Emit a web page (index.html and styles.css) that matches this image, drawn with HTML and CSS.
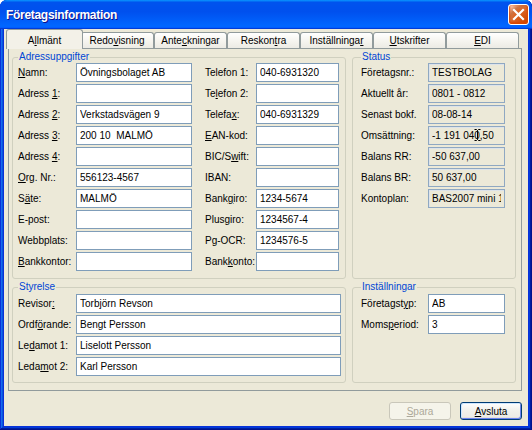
FILE: index.html
```html
<!DOCTYPE html>
<html lang="sv">
<head>
    <meta charset="UTF-8">
    <meta name="viewport" content="width=device-width, initial-scale=1.0">
    <title>Företagsinformation</title>
    <link rel="stylesheet" href="styles.css">
</head>
<body>
    <div class="window">
    <div class="title-bar">
        <span class="title">Företagsinformation</span>
        <button class="close" aria-label="Stäng">
        <svg width="13" height="13" viewBox="0 0 13 13"><path d="M2 2 L11 11 M11 2 L2 11" stroke="#fff" stroke-width="2.2" stroke-linecap="square"/></svg>
        </button>
    </div>
    <div class="client">
        <div class="tabs">
        <div class="tab active">A<u>l</u>lmänt</div>
        <div class="tab">Redo<u>v</u>isning</div>
        <div class="tab">Ante<u>c</u>kningar</div>
        <div class="tab">Reskon<u>t</u>ra</div>
        <div class="tab">Inställninga<u>r</u></div>
        <div class="tab"><u>U</u>tskrifter</div>
        <div class="tab"><u>E</u>DI</div>
        </div>
        <div class="panel">
        <fieldset class="group addr">
            <legend>Adressuppgifter</legend>
            <div class="form">
            <label><u>N</u>amn:</label><input type="text" value="Övningsbolaget AB">
            <label class="r">Telefon 1:</label><input type="text" value="040-6931320">
            <label>Adress <u>1</u>:</label><input type="text" value="">
            <label class="r">Te<u>l</u>efon 2:</label><input type="text" value="">
            <label>Adress <u>2</u>:</label><input type="text" value="Verkstadsvägen 9">
            <label class="r">Telefa<u>x</u>:</label><input type="text" value="040-6931329">
            <label>Adress <u>3</u>:</label><input type="text" value="200 10  MALMÖ">
            <label class="r"><u>E</u>AN-kod:</label><input type="text" value="">
            <label>Adress <u>4</u>:</label><input type="text" value="">
            <label class="r">BIC/S<u>w</u>ift:</label><input type="text" value="">
            <label><u>O</u>rg. Nr.:</label><input type="text" value="556123-4567">
            <label class="r">IBAN:</label><input type="text" value="">
            <label>S<u>ä</u>te:</label><input type="text" value="MALMÖ">
            <label class="r">Bank<u>g</u>iro:</label><input type="text" value="1234-5674">
            <label>E-post:</label><input type="text" value="">
            <label class="r">Plus<u>g</u>iro:</label><input type="text" value="1234567-4">
            <label>Webbplats:</label><input type="text" value="">
            <label class="r">Pg-OCR:</label><input type="text" value="1234576-5">
            <label><u>B</u>ankkontor:</label><input type="text" value="">
            <label class="r">Bank<u>k</u>onto:</label><input type="text" value="">
            </div>
        </fieldset>
        <fieldset class="group status">
            <legend>Status</legend>
            <div class="form">
            <label>Företagsnr.:</label><input type="text" readonly value="TESTBOLAG">
            <label>Aktuellt år:</label><input type="text" readonly value="0801 - 0812">
            <label>Senast bokf.</label><input type="text" readonly value="08-08-14">
            <label>Omsättning:</label>
            <span class="cell"><input type="text" readonly value="-1 191 040,50"><svg class="ibeam" width="7" height="12" viewBox="0 0 7 12"><path d="M0.5 0.5 H2.5 L3.5 1.5 L4.5 0.5 H6.5 M3.5 1.5 V10.5 M0.5 11.5 H2.5 L3.5 10.5 L4.5 11.5 H6.5" fill="none" stroke="#000" stroke-width="1"/></svg></span>
            <label>Balans RR:</label><input type="text" readonly value="-50 637,00">
            <label>Balans BR:</label><input type="text" readonly value="50 637,00">
            <label>Kontoplan:</label><input type="text" readonly value="BAS2007 mini 1.0">
            </div>
        </fieldset>
        <fieldset class="group board">
            <legend>Styrelse</legend>
            <div class="form">
            <label>Revisor<u>:</u></label><input type="text" value="Torbjörn Revson">
            <label>Ordf<u>ö</u>rande:</label><input type="text" value="Bengt Persson">
            <label>Le<u>d</u>amot 1:</label><input type="text" value="Liselott Persson">
            <label>Leda<u>m</u>ot 2:</label><input type="text" value="Karl Persson">
            </div>
        </fieldset>
        <fieldset class="group settings">
            <legend>Inställningar</legend>
            <div class="form">
            <label>Företagst<u>y</u>p:</label><input type="text" value="AB">
            <label>Moms<u>p</u>eriod:</label><input type="text" value="3">
            </div>
        </fieldset>
        </div>
        <div class="buttons">
        <button class="btn" disabled><u>S</u>para</button>
        <button class="btn default"><u>A</u>vsluta</button>
        </div>
    </div>
    </div>
</body>
</html>
```

FILE: styles.css
```css
body {
    margin: 0;
    background: #fff;
    font-family: "Liberation Sans", Arial, sans-serif;
    font-size: 10px;
    color: #000;
}
.window {
    width: 532px;
    height: 430px;
    display: flex;
    flex-direction: column;
    background: #0831D9;
    border-radius: 7px 7px 0 0;
    overflow: hidden;
    box-shadow: inset -1px -1px #00138C, inset 1px 1px #0831D9, inset -2px -2px #001EA0, inset 2px 2px #166AEE, inset -3px -3px #003BDA, inset 3px 3px #0855DD;
}
.title-bar {
    height: 29px;
    flex: none;
    display: flex;
    align-items: center;
    justify-content: space-between;
    padding: 0 3px 0 6px;
    background: linear-gradient(180deg, #0997FF, #0053EE 8%, #0050EE 40%, #06F 88%, #06F 93%, #005BFF 95%, #003DD7 96%, #003DD7);
}
.title {
    color: #fff;
    font-weight: bold;
    font-size: 12px;
    letter-spacing: -0.3px;
    text-shadow: 1px 1px #0F1089;
    margin-top: 1px;
}
.close {
    width: 21px;
    height: 21px;
    padding: 0;
    border: 1px solid #fff;
    border-radius: 3px;
    display: flex;
    align-items: center;
    justify-content: center;
    background: radial-gradient(circle at 90% 90%, #CC4600 0%, #DC6527 55%, #CD7546 70%, #FFCCB2 90%, #fff 100%);
    box-shadow: inset 0 -1px 2px 1px #DA4600;
}
.client {
    flex: 1;
    margin: 0 4px 4px;
    background: #ECE9D8;
    display: flex;
    flex-direction: column;
    padding: 0 6px 0 4px;
}
.tabs {
    height: 19px;
    display: flex;
    align-items: flex-end;
    position: relative;
    z-index: 1;
}
.tab {
    width: 73px;
    height: 16px;
    box-sizing: border-box;
    border: 1px solid #919B9C;
    border-bottom: none;
    border-radius: 3px 3px 0 0;
    background: linear-gradient(#fff, #F6F5F0 50%, #ECEBE4);
    text-align: center;
    line-height: 15px;
    flex: none;
}
.tab.active {
    width: 77px;
    height: 20px;
    margin: 0 -2px -1px;
    background: #F3F1E8;
    line-height: 21px;
    position: relative;
}
.tab.active + .tab {
    border-left: none;
}
.panel {
    height: 343px;
    box-sizing: border-box;
    border: 1px solid #919B9C;
    background: #ECE9D8;
    display: grid;
    grid-template-columns: 334px 164px;
    grid-template-rows: 228px 102px;
    column-gap: 6px;
    row-gap: 2px;
    padding: 2px 0 0 3px;
    align-content: start;
}
.group {
    margin: 0;
    padding: 0 0 0 5px;
    border: 1px solid #D0D0BF;
    border-radius: 3px;
    min-width: 0;
    box-sizing: border-box;
}
.group legend {
    color: #0046D5;
    padding: 0 1px;
    line-height: 12px;
}
.status, .settings {
    padding-left: 8px;
}
.form {
    display: grid;
    grid-auto-rows: 19px;
    row-gap: 2px;
}
.addr .form {
    grid-template-columns: 58px 116px 64px 83px;
}
.status .form, .settings .form {
    grid-template-columns: 67px 77px;
}
.board .form {
    grid-template-columns: 58px 265px;
    padding-top: 1px;
}
.settings .form {
    padding-top: 1px;
}
.form label {
    box-sizing: border-box;
    padding-top: 3px;
    line-height: 14px;
    white-space: nowrap;
}
.form label.r {
    padding-left: 13px;
}
.form input {
    width: 100%;
    height: 19px;
    box-sizing: border-box;
    margin: 0;
    padding: 0 3px;
    border: 1px solid #7F9DB9;
    background: #fff;
    font: inherit;
    color: #000;
    outline: none;
}
.form input[readonly] {
    background: #ECE9D8;
    border-color: #8FA8C2;
    box-shadow: inset 1px 1px #DDE3EA;
}
.cell {
    position: relative;
    display: block;
}
.ibeam {
    position: absolute;
    left: 46px;
    top: 3px;
}
.buttons {
    display: flex;
    justify-content: flex-end;
    gap: 9px;
    margin-top: 11px;
}
.btn {
    width: 62px;
    height: 18px;
    padding: 0;
    font: inherit;
    color: #000;
    border: 1px solid #003C74;
    border-radius: 3px;
    background: linear-gradient(#fff, #F0F0EA 50%, #ECEBE6 86%, #D6D0C5);
}
.btn.default {
    box-shadow: inset 1px 1px #CEE7FF, inset -1px -1px #6982EE;
}
.btn:disabled {
    color: #ACA899;
    border-color: #C9C7BA;
    background: #F5F4EA;
}
```
